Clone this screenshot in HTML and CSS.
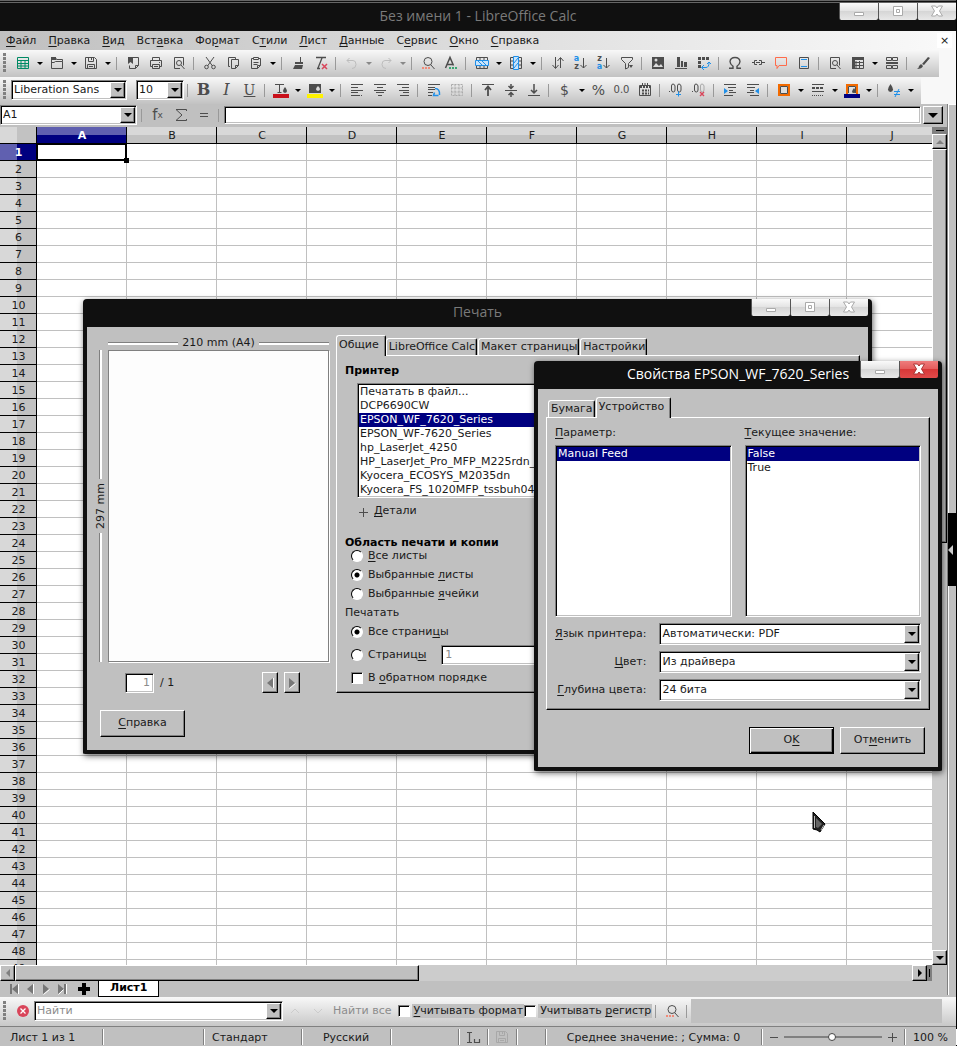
FILE: index.html
```
<!DOCTYPE html>
<html lang="ru">

<head>
  <meta charset="UTF-8">
  <title>Без имени 1 - LibreOffice Calc</title>
  <link rel="stylesheet" href="styles.css">
</head>

<body>
  <svg class="sprite" aria-hidden="true">
    <symbol id="sheet" viewBox="0 0 16 16"><path d="M2.500 2.500h11v11h-11zM2.500 5.500h11M2.500 8.500h11M2.500 11h11M6 5.500v8M10 5.500v8" stroke="#008a64"/></symbol>
    <symbol id="folder" viewBox="0 0 16 16"><path d="M2.500 13.500v-11h4l1 2h6v2M2.500 13.500h11v-7h-7l-1.500 1H3"/><path d="M2 2h5v3H2z" fill="#4d4d4d" stroke="none"/></symbol>
    <symbol id="save" viewBox="0 0 16 16"><path d="M2.500 2.500h9l2 2v9h-11zM5.500 2.500v4h5v-4M8.500 3v2M4.500 13.500v-4h7v4M6 11.500h4"/></symbol>
    <symbol id="export" viewBox="0 0 16 16"><path d="M3 2h5v7L5.500 7 3 9z" fill="#4d4d4d" stroke="none"/><path d="M8 2.500h5.500v8l-3 3h-6v-3M10.500 13.500v-3h3"/></symbol>
    <symbol id="print" viewBox="0 0 16 16"><path d="M4.500 5.500v-3h7v3M4.500 11.500h-2v-6h11v6h-2M4.500 9.500h7v4h-7zM6 11.500h4M11 7.500h1"/></symbol>
    <symbol id="preview" viewBox="0 0 16 16"><path d="M9 13.500H3.500v-11h9v8"/><circle cx="8" cy="8" r="2.500"/><path d="M10 10l3.500 4"/></symbol>
    <symbol id="cut" viewBox="0 0 16 16"><path d="M4 2l6.500 9M12 2l-6.500 9"/><circle cx="4.500" cy="12" r="1.800"/><circle cx="11.500" cy="12" r="1.800"/></symbol>
    <symbol id="copy" viewBox="0 0 16 16"><path d="M5 11.500H3.500v-9h7V4M6.500 4.500h7v6l-3 3h-4zM10.500 13.500v-3h3"/></symbol>
    <symbol id="paste" viewBox="0 0 16 16"><path d="M5.500 3.500H3.500v10h6l3-3v-7H10.500M5.500 2.500h5v2h-5zM5.500 7.500h5M5.500 9.500h4M9.500 13.500v-3h3"/></symbol>
    <symbol id="brush" viewBox="0 0 16 16"><path d="M10 2h1v5h2v2H5V7h5zM5 10h8l-1 4H3z" fill="#4d4d4d" stroke="none"/></symbol>
    <symbol id="clear" viewBox="0 0 16 16"><path d="M3 2.500h10M9 3L5 13M4 13.500h3" stroke-width="1.300"/><path d="M9 9l5 5M14 9l-5 5" stroke="#d9455a" stroke-width="1.500"/></symbol>
    <symbol id="undo" viewBox="0 0 16 16"><path d="M5.500 3L3 5.500 5.500 8M3 5.500h6q3 0 3 4t-4 4" stroke="#bdbdbd"/></symbol>
    <symbol id="redo" viewBox="0 0 16 16"><path d="M10.500 3L13 5.500 10.500 8M13 5.500H7q-3 0-3 4t4 4" stroke="#bdbdbd"/></symbol>
    <symbol id="find" viewBox="0 0 16 16"><circle cx="8" cy="6.500" r="4"/><path d="M11 10l3.500 4"/><path d="M2 13h9" stroke="#f08a78" stroke-width="2" stroke-dasharray="2 1"/></symbol>
    <symbol id="spell" viewBox="0 0 16 16"><path d="M2.500 13L7 2.500l3.500 8M4 9.500h6" stroke-width="1.500"/><path d="M6 13h9" stroke="#3aa672" stroke-width="2" stroke-dasharray="2 1"/></symbol>
    <symbol id="row" viewBox="0 0 16 16"><path d="M2.500 2.500h11v11h-11zM2.500 5.500h11M2.500 10.500h11M6 2.500v3M10 2.500v3M6 10.500v3M10 10.500v3"/><path d="M1.500 5.500h13v5h-13z" fill="#c9e4fb" stroke="#1f8fe8"/><path d="M4 6l4 4M8 6l4 4" stroke="#1f8fe8"/></symbol>
    <symbol id="col" viewBox="0 0 16 16"><path d="M2.500 2.500h11v11h-11zM5.500 2.500v11M10.500 2.500v11M2.500 6h11M2.500 10h11"/><path d="M5.500 1.500h5v13h-5z" fill="#c9e4fb" stroke="#1f8fe8"/><path d="M6 8l4-5M6 13l4-5" stroke="#1f8fe8"/></symbol>
    <symbol id="sort" viewBox="0 0 16 16"><path d="M5.500 2v11M2.500 10l3 3.500L8.500 10M10.500 13V3M7.500 6l3-3.500L13.500 6"/></symbol>
    <symbol id="arrow-down" viewBox="0 0 8 16"><path d="M4.500 3v10M1.500 10l3 3 3-3"/></symbol>
    <symbol id="filter" viewBox="0 0 16 16"><path d="M2.500 2.500h11v2l-4 4v4l-3 1.500V8.500l-4-4z"/><path d="M10 10h4l-2 3z" fill="#4d4d4d" stroke="none"/></symbol>
    <symbol id="image" viewBox="0 0 16 16"><path d="M2 2h12v12H2z" fill="#4d4d4d" stroke="none"/><path d="M3 12l3-4 3 3 2-2 2 3z" fill="#ddd" stroke="none"/><circle cx="6" cy="5" r="1.500" fill="#ddd" stroke="none"/></symbol>
    <symbol id="chart" viewBox="0 0 16 16"><path d="M4 2h3v10H4zM8 6h2v6H8zM11 7h3v5h-3z" fill="#4d4d4d" stroke="none"/><path d="M2 13.500h12"/></symbol>
    <symbol id="pivot" viewBox="0 0 16 16"><path d="M2 3.500h12M3.500 6v8" stroke-width="3" stroke-dasharray="3 1"/><path d="M6 12.500h4q3 0 3-5M8 10l-2.500 2.500L8 15M11 9l2-2 2 2" stroke="#1f8fe8"/></symbol>
    <symbol id="omega" viewBox="0 0 16 16"><path d="M2 13.300h4v-2Q3 9 3 6.500 3.500 2.500 8 2.500T13 6.500Q13 9 10 11.300v2h4" stroke-width="1.400"/></symbol>
    <symbol id="link" viewBox="0 0 16 16"><path d="M2 7.500h2M7 5.500H4.500v4H7M9 5.500h2.500v4H9M6 7.500h4M12 7.500h3"/></symbol>
    <symbol id="comment" viewBox="0 0 16 16"><path d="M2.500 2.500h11v8H6l-2 3v-3H2.500z" stroke="#ff6b4a"/></symbol>
    <symbol id="headfoot" viewBox="0 0 16 16"><path d="M3.500 2.500h9v11h-9z"/><path d="M5 4.500h6M5 11.500h6" stroke="#1f8fe8"/></symbol>
    <symbol id="freeze" viewBox="0 0 16 16"><path d="M2.500 2.500h11v11h-11zM6 6v7.500M9.500 6v7.500M3 7.500h11M3 10.500h11"/><path d="M2 2h12v3H2zM2 2h3v12H2z" fill="#4d4d4d" stroke="none"/></symbol>
    <symbol id="split" viewBox="0 0 16 16"><path d="M2.500 2.500h5v3h-5zM8.500 2.500h5v3h-5zM2.500 10.500h5v3h-5zM8.500 10.500h5v3h-5z"/><path d="M2 8h12" stroke-width="2"/></symbol>
    <symbol id="draw" viewBox="0 0 16 16"><path d="M13 2l2 1-6 7-2-1zM6 9l2 2q-1 3-6 3 2-1 2-3z" fill="#4d4d4d" stroke="none"/></symbol>
    <symbol id="fontcolor" viewBox="0 0 16 16"><path d="M2 2.500h9M6.500 3v8M4.500 10.500h4"/><path d="M12 5q4 5 0 6-4-1 0-6z" fill="#4d4d4d" stroke="none"/><path d="M0 12h16v4H0z" fill="#c9101a" stroke="none"/></symbol>
    <symbol id="hilite" viewBox="0 0 16 16"><path d="M2 2h12v9H2z" fill="#4d4d4d" stroke="none"/><path d="M11 4q4 4 0 5-4-1 0-5z" fill="#ddd" stroke="none"/><path d="M0 12h16v4H0z" fill="#fff200" stroke="none"/></symbol>
    <symbol id="left" viewBox="0 0 16 16"><path d="M2 2.500h12M2 5.500h7M2 8.500h12M2 10.500h7M2 13.500h9M12 13.500h1"/></symbol>
    <symbol id="center" viewBox="0 0 16 16"><path d="M2 2.500h12M5 5.500h6M2 8.500h12M4 10.500h8M6 13.500h4"/></symbol>
    <symbol id="right" viewBox="0 0 16 16"><path d="M2 2.500h12M7 5.500h7M4 8.500h10M8 10.500h6M5 13.500h9"/></symbol>
    <symbol id="wrap" viewBox="0 0 16 16"><path d="M2 2.500h12M2 5.500h7M2 7.500h7M2 10.500h5M2 13.500h4"/><path d="M9 6.500q5 0 4.500 6.500M8.500 10.500l-1 3h5" stroke="#1f8fe8" stroke-width="1.500"/></symbol>
    <symbol id="merge" viewBox="0 0 16 16"><path d="M2.500 2.500h11v11h-11zM6 2.500v11M10 2.500v11M2.500 6h11M2.500 10h11" stroke="#aaa" stroke-dasharray="2 1"/></symbol>
    <symbol id="top" viewBox="0 0 16 16"><path d="M2 2.500h12"/><path d="M8 5v9M5 8l3-3.500L11 8" stroke-width="1.800"/></symbol>
    <symbol id="middle" viewBox="0 0 16 16"><path d="M2 8.500h12"/><path d="M8 2v4M8 15v-4M5.500 4L8 6.500 10.500 4M5.500 13L8 10.500l2.500 2.500" stroke-width="1.500"/></symbol>
    <symbol id="bottom" viewBox="0 0 16 16"><path d="M2 13.500h12"/><path d="M8 2v9M5 8l3 3 3-3" stroke-width="1.500"/></symbol>
    <symbol id="date" viewBox="0 0 16 16"><path d="M2.500 3.500h11v10h-11zM5.500 1v3M8 1v3M10.500 1v3"/><path d="M3 5h10M5 8.500h7M5 11.500h7" stroke-width="2" stroke-dasharray="2 1"/></symbol>
    <symbol id="dec-add" viewBox="0 0 16 16"><path d="M1 9.500h1M3.500 4q0-2 1.500-2t2 2v4q0 2-1.700 2T3.500 8zM9.500 4q0-2 1.500-2t2 2v4q0 2-1.700 2T9.500 8z"/><path d="M10.500 9.500v5M8 12.500h5" stroke="#1f8fe8"/></symbol>
    <symbol id="dec-del" viewBox="0 0 16 16"><path d="M1 9.500h1M3.500 4q0-2 1.500-2t2 2v4q0 2-1.700 2T3.500 8z"/><path d="M9.500 4q0-2 1.500-2t2 2v4q0 2-1.700 2T9.500 8z" stroke="#aaa"/><path d="M9 10l4 4M13 10l-4 4" stroke="#d9455a" stroke-width="1.400"/></symbol>
    <symbol id="indent" viewBox="0 0 16 16"><path d="M2 2.500h12M6 5.500h8M7 8.500h4M7 10.500h7M2 13.500h9"/><path d="M2 6l4 3-4 3z" fill="#1f8fe8" stroke="none"/></symbol>
    <symbol id="outdent" viewBox="0 0 16 16"><path d="M2 2.500h12M2 5.500h8M5 8.500h4M2 10.500h7M5 13.500h9"/><path d="M14 6l-4 3 4 3z" fill="#1f8fe8" stroke="none"/></symbol>
    <symbol id="borders" viewBox="0 0 16 16"><path d="M3 3h10v10H3z" stroke="#f26a00" stroke-width="2"/><path d="M4.500 4.500h7v7h-7z" fill="#ddd"/></symbol>
    <symbol id="linestyle" viewBox="0 0 16 16"><path d="M2 2.500h12M2 9.500h12"/><path d="M2 6h12" stroke-width="2" stroke-dasharray="3 1"/><path d="M2 13.500h12" stroke-dasharray="1 1"/></symbol>
    <symbol id="bordercolor" viewBox="0 0 16 16"><path d="M3 12V3h10v9" stroke="#f26a00" stroke-width="2"/><path d="M4.500 11V4.500h7V11"/><path d="M10 6q4 5 0 5-4 0 0-5z" fill="#4d4d4d" stroke="none"/><path d="M0 12h16v4H0z" fill="#000080" stroke="none"/></symbol>
    <symbol id="cond" viewBox="0 0 16 16"><path d="M4.500 2q5 7 0 8-5-1 0-8z" fill="#4d4d4d" stroke="none"/><path d="M8 9.500h6M8 12.500h6M13 7l-4 8" stroke="#1f8fe8"/></symbol>
    <symbol id="sigma" viewBox="0 0 16 16"><path d="M13.500 4V2.500H3L9 8l-6 5.500h10.500V12"/></symbol>
    <symbol id="equals" viewBox="0 0 16 16"><path d="M4 6.500h8M4 9.500h8"/></symbol>
    <symbol id="min" viewBox="0 0 16 16"><path d="M3.500 9.500h9v3h-9z" fill="#fff" stroke="#aaa"/></symbol>
    <symbol id="max" viewBox="0 0 16 16"><path d="M3.500 3.500h9v9h-9zM6.500 6.500h3v3h-3z" fill="#fff" stroke="#aaa"/></symbol>
    <symbol id="close" viewBox="0 0 16 16"><path d="M2.500 3h4L8 5l1.500-2h4l-3 5 3 5h-4L8 11l-1.500 2h-4l3-5z" fill="#fff" stroke="#aaa"/></symbol>
    <symbol id="close-hot" viewBox="0 0 16 16"><path d="M2.500 3h4L8 5l1.500-2h4l-3 5 3 5h-4L8 11l-1.500 2h-4l3-5z" fill="#fff" stroke="#a33"/></symbol>
    <symbol id="plus" viewBox="0 0 16 16"><path d="M8.500 4v9M4 8.500h9"/></symbol>
    <symbol id="minus" viewBox="0 0 16 16"><path d="M4 8.500h8"/></symbol>
    <symbol id="stop" viewBox="0 0 16 16"><circle cx="8" cy="8" r="6" fill="#d9455a" stroke="none"/><path d="M5.500 5.500l5 5M10.500 5.500l-5 5" stroke="#fff" stroke-width="1.300"/></symbol>
    <symbol id="up" viewBox="0 0 16 16"><path d="M4 10l4-4 4 4" stroke="#ccc"/></symbol>
    <symbol id="down" viewBox="0 0 16 16"><path d="M4 6l4 4 4-4" stroke="#ccc"/></symbol>
    <symbol id="insert" viewBox="0 0 16 16"><path d="M2 3.500h5M4.500 4v9M2 13.500h5M9.500 10v3.500h5V10" stroke-width="1.200"/></symbol>
    <symbol id="first" viewBox="0 0 16 16"><path d="M5 3v10" stroke="#777" stroke-width="2"/><path d="M12 3v10L6 8z" fill="#777" stroke="none"/><path d="M12.500 3v10" stroke="#fff"/></symbol>
    <symbol id="prev" viewBox="0 0 16 16"><path d="M11 3v10L5 8z" fill="#777" stroke="none"/><path d="M11.500 3v10" stroke="#fff"/></symbol>
    <symbol id="next" viewBox="0 0 16 16"><path d="M5 3v10l6-5z" fill="#777" stroke="none"/><path d="M5.500 13.500l6-5" stroke="#fff"/></symbol>
    <symbol id="last" viewBox="0 0 16 16"><path d="M4 3v10l6-5z" fill="#777" stroke="none"/><path d="M11 3v10" stroke="#777" stroke-width="2"/><path d="M4.500 13.500l5-5M12.500 3v10" stroke="#fff"/></symbol>
    <symbol id="add" viewBox="0 0 16 16"><path d="M6 2h4v4h4v4h-4v4H6v-4H2V6h4z" fill="#000" stroke="none"/></symbol>
  </svg>

  <div class="window">
    <header class="titlebar">
      <h1>Без имени 1 - LibreOffice Calc</h1>
      <div class="window-buttons">
        <button aria-label="Свернуть"><svg><use href="#min"/></svg></button>
        <button aria-label="Развернуть"><svg><use href="#max"/></svg></button>
        <button aria-label="Закрыть"><svg><use href="#close"/></svg></button>
      </div>
    </header>

    <nav class="menubar">
      <button><u>Ф</u>айл</button>
      <button><u>П</u>равка</button>
      <button><u>В</u>ид</button>
      <button>Вст<u>а</u>вка</button>
      <button>Фо<u>р</u>мат</button>
      <button>С<u>т</u>или</button>
      <button><u>Л</u>ист</button>
      <button><u>Д</u>анные</button>
      <button>С<u>е</u>рвис</button>
      <button><u>О</u>кно</button>
      <button><u>С</u>правка</button>
      <button class="close-doc" aria-label="Закрыть документ">×</button>
    </nav>

    <div class="toolbar-row">
      <div class="toolbar standard">
        <span class="grip"></span>
        <button class="tool" aria-label="Создать"><svg><use href="#sheet"/></svg></button><button class="drop" aria-label="Ещё"></button>
        <button class="tool" aria-label="Открыть"><svg><use href="#folder"/></svg></button><button class="drop" aria-label="Ещё"></button>
        <button class="tool" aria-label="Сохранить"><svg><use href="#save"/></svg></button><button class="drop" aria-label="Ещё"></button>
        <span class="sep"></span>
        <button class="tool" aria-label="Экспорт"><svg><use href="#export"/></svg></button>
        <button class="tool" aria-label="Печать"><svg><use href="#print"/></svg></button>
        <button class="tool" aria-label="Просмотр"><svg><use href="#preview"/></svg></button>
        <span class="sep"></span>
        <button class="tool" aria-label="Вырезать"><svg><use href="#cut"/></svg></button>
        <button class="tool" aria-label="Копировать"><svg><use href="#copy"/></svg></button>
        <button class="tool" aria-label="Вставить"><svg><use href="#paste"/></svg></button><button class="drop" aria-label="Ещё"></button>
        <span class="sep"></span>
        <button class="tool" aria-label="Копировать форматирование"><svg><use href="#brush"/></svg></button>
        <button class="tool" aria-label="Очистить"><svg><use href="#clear"/></svg></button>
        <span class="sep"></span>
        <button class="tool" aria-label="Отменить"><svg><use href="#undo"/></svg></button><button class="drop off" aria-label="Ещё"></button>
        <button class="tool" aria-label="Вернуть"><svg><use href="#redo"/></svg></button><button class="drop off" aria-label="Ещё"></button>
        <span class="sep"></span>
        <button class="tool" aria-label="Найти и заменить"><svg><use href="#find"/></svg></button>
        <button class="tool" aria-label="Орфография"><svg><use href="#spell"/></svg></button>
        <span class="sep"></span>
        <button class="tool" aria-label="Строка"><svg><use href="#row"/></svg></button><button class="drop" aria-label="Ещё"></button>
        <button class="tool" aria-label="Столбец"><svg><use href="#col"/></svg></button><button class="drop" aria-label="Ещё"></button>
        <span class="sep"></span>
        <button class="tool" aria-label="Сортировка"><svg><use href="#sort"/></svg></button>
        <button class="tool sort" aria-label="По возрастанию"><span><b>a</b><i>z</i></span><svg><use href="#arrow-down"/></svg></button>
        <button class="tool sort" aria-label="По убыванию"><span><i>z</i><b>a</b></span><svg><use href="#arrow-down"/></svg></button>
        <button class="tool" aria-label="Автофильтр"><svg><use href="#filter"/></svg></button>
        <span class="sep"></span>
        <button class="tool" aria-label="Изображение"><svg><use href="#image"/></svg></button>
        <button class="tool" aria-label="Диаграмма"><svg><use href="#chart"/></svg></button>
        <button class="tool" aria-label="Сводная таблица"><svg><use href="#pivot"/></svg></button>
        <span class="sep"></span>
        <button class="tool" aria-label="Специальные символы"><svg><use href="#omega"/></svg></button>
        <button class="tool" aria-label="Гиперссылка"><svg><use href="#link"/></svg></button>
        <button class="tool" aria-label="Комментарий"><svg><use href="#comment"/></svg></button>
        <button class="tool" aria-label="Колонтитулы"><svg><use href="#headfoot"/></svg></button>
        <span class="sep"></span>
        <button class="tool" aria-label="Область печати"><svg><use href="#preview"/></svg></button>
        <button class="tool" aria-label="Закрепить"><svg><use href="#freeze"/></svg></button><button class="drop" aria-label="Ещё"></button>
        <button class="tool" aria-label="Разделить окно"><svg><use href="#split"/></svg></button>
        <span class="sep"></span>
        <button class="tool" aria-label="Функции рисования"><svg><use href="#draw"/></svg></button>
      </div>
    </div>

    <div class="toolbar-row">
      <div class="toolbar formatting">
        <span class="grip"></span>
        <span class="combo font-name"><select aria-label="Шрифт"><option>Liberation Sans</option></select><span class="combo-arrow"></span></span>
        <span class="combo font-size"><select aria-label="Размер"><option>10</option></select><span class="combo-arrow"></span></span>
        <span class="sep"></span>
        <button class="tool letter bold">B</button>
        <button class="tool letter italic">I</button>
        <button class="tool letter underline">U</button>
        <span class="sep"></span>
        <button class="tool" aria-label="Цвет текста"><svg><use href="#fontcolor"/></svg></button><button class="drop" aria-label="Ещё"></button>
        <button class="tool" aria-label="Цвет фона"><svg><use href="#hilite"/></svg></button><button class="drop" aria-label="Ещё"></button>
        <span class="sep"></span>
        <button class="tool" aria-label="По левому краю"><svg><use href="#left"/></svg></button>
        <button class="tool" aria-label="По центру"><svg><use href="#center"/></svg></button>
        <button class="tool" aria-label="По правому краю"><svg><use href="#right"/></svg></button>
        <span class="sep"></span>
        <button class="tool" aria-label="Обтекание"><svg><use href="#wrap"/></svg></button>
        <button class="tool" aria-label="Объединить"><svg><use href="#merge"/></svg></button>
        <span class="sep"></span>
        <button class="tool" aria-label="По верху"><svg><use href="#top"/></svg></button>
        <button class="tool" aria-label="По середине"><svg><use href="#middle"/></svg></button>
        <button class="tool" aria-label="По низу"><svg><use href="#bottom"/></svg></button>
        <span class="sep"></span>
        <button class="tool sign">$</button><button class="drop" aria-label="Ещё"></button>
        <button class="tool sign">%</button>
        <button class="tool number">0.0</button>
        <button class="tool" aria-label="Дата"><svg><use href="#date"/></svg></button>
        <span class="sep"></span>
        <button class="tool" aria-label="Добавить разряд"><svg><use href="#dec-add"/></svg></button>
        <button class="tool" aria-label="Убрать разряд"><svg><use href="#dec-del"/></svg></button>
        <span class="sep"></span>
        <button class="tool" aria-label="Увеличить отступ"><svg><use href="#indent"/></svg></button>
        <button class="tool" aria-label="Уменьшить отступ"><svg><use href="#outdent"/></svg></button>
        <span class="sep"></span>
        <button class="tool" aria-label="Обрамление"><svg><use href="#borders"/></svg></button><button class="drop" aria-label="Ещё"></button>
        <button class="tool" aria-label="Стиль линии"><svg><use href="#linestyle"/></svg></button><button class="drop" aria-label="Ещё"></button>
        <button class="tool" aria-label="Цвет линии"><svg><use href="#bordercolor"/></svg></button><button class="drop" aria-label="Ещё"></button>
        <span class="sep"></span>
        <button class="tool" aria-label="Условное форматирование"><svg><use href="#cond"/></svg></button><button class="drop" aria-label="Ещё"></button>
      </div>
    </div>

    <main class="workspace">
      <div class="document">
        <div class="formula-bar">
          <span class="combo name-box"><input aria-label="Имя ячейки" value="A1"><span class="combo-arrow"></span></span>
          <span class="sep"></span>
          <button class="tool fx">f<sub>x</sub></button>
          <button class="tool" aria-label="Сумма"><svg><use href="#sigma"/></svg></button>
          <button class="tool" aria-label="Формула"><svg><use href="#equals"/></svg></button>
          <span class="sep"></span>
          <input class="formula" aria-label="Строка ввода">
          <button class="expand" aria-label="Развернуть строку"></button>
        </div>

        <div class="sheet">
          <div class="grid">
            <table>
              <thead><tr id="columns"></tr></thead>
              <tbody id="rows"></tbody>
            </table>
          </div>
          <div class="vscroll">
            <span class="splitter"></span>
            <button class="scroll-button up" aria-label="Вверх"></button>
            <span class="thumb"></span>
            <button class="scroll-button down" aria-label="Вниз"></button>
          </div>
        </div>

        <div class="hscroll">
          <button class="scroll-button back" aria-label="Влево"></button>
          <div class="track"><span class="thumb"></span></div>
          <button class="scroll-button forward" aria-label="Вправо"></button>
          <span class="splitter"></span>
        </div>

        <div class="sheet-tabs">
          <button aria-label="Первый"><svg><use href="#first"/></svg></button>
          <button aria-label="Назад"><svg><use href="#prev"/></svg></button>
          <button aria-label="Вперёд"><svg><use href="#next"/></svg></button>
          <button aria-label="Последний"><svg><use href="#last"/></svg></button>
          <button class="add" aria-label="Добавить лист"><svg><use href="#add"/></svg></button>
          <button class="current">Лист1</button>
        </div>
      </div>
      <aside class="sidebar"><button aria-label="Показать панель"></button></aside>
    </main>

    <div class="findbar">
      <span class="grip"></span>
      <button class="tool" aria-label="Закрыть поиск"><svg><use href="#stop"/></svg></button>
      <span class="combo find"><input aria-label="Найти" placeholder="Найти"><span class="combo-arrow"></span></span>
      <button class="tool" aria-label="Предыдущее"><svg><use href="#up"/></svg></button>
      <button class="tool" aria-label="Следующее"><svg><use href="#down"/></svg></button>
      <button class="find-all" disabled>Найти все</button>
      <label class="option"><input type="checkbox"><span><u>У</u>читывать формат</span></label>
      <label class="option"><input type="checkbox"><span>Учитывать <u>р</u>егистр</span></label>
      <span class="sep"></span>
      <button class="tool" aria-label="Найти и заменить"><svg><use href="#find"/></svg></button>
      <span class="sep"></span>
      <span class="message"></span>
    </div>

    <footer class="statusbar">
      <span class="sheet-count">Лист 1 из 1</span>
      <span class="wide"></span>
      <span class="style">Стандарт</span>
      <span class="language">Русский</span>
      <span class="empty"></span>
      <span class="small"><svg><use href="#insert"/></svg></span>
      <span class="small faded"><svg><use href="#save"/></svg></span>
      <span class="small"></span>
      <span class="totals">Среднее значение: ; Сумма: 0</span>
      <span class="zoom">
        <button aria-label="Уменьшить"><svg><use href="#minus"/></svg></button>
        <input type="range" aria-label="Масштаб" min="0" max="100" value="49">
        <button aria-label="Увеличить"><svg><use href="#plus"/></svg></button>
      </span>
      <span class="percent">100 %</span>
    </footer>
  </div>

  <section class="dialog print-dialog">
    <header class="dialog-title">
      <h2>Печать</h2>
      <div class="window-buttons">
        <button aria-label="Свернуть"><svg><use href="#min"/></svg></button>
        <button aria-label="Развернуть"><svg><use href="#max"/></svg></button>
        <button aria-label="Закрыть"><svg><use href="#close"/></svg></button>
      </div>
    </header>
    <div class="print-body">
      <div class="preview">
        <div class="paper-width">210 mm (A4)</div>
        <div class="paper-height">297 mm</div>
        <div class="paper"></div>
        <div class="pager">
          <input aria-label="Страница" value="1" disabled>
          <span>/ 1</span>
          <button class="page-button" aria-label="Назад"><svg><use href="#prev"/></svg></button>
          <button class="page-button" aria-label="Вперёд"><svg><use href="#next"/></svg></button>
        </div>
      </div>
      <div class="settings">
        <div class="tabs">
          <button class="tab active">Общие</button>
          <button class="tab">LibreOffice Calc</button>
          <button class="tab">Макет страницы</button>
          <button class="tab">Настройки</button>
        </div>
        <div class="panel">
          <h3>Принтер</h3>
          <select class="listbox printers" size="8" aria-label="Принтер">
            <option>Печатать в файл...</option>
            <option>DCP6690CW</option>
            <option selected>EPSON_WF_7620_Series</option>
            <option>EPSON_WF-7620_Series</option>
            <option>hp_LaserJet_4250</option>
            <option>HP_LaserJet_Pro_MFP_M225rdn_</option>
            <option>Kyocera_ECOSYS_M2035dn</option>
            <option>Kyocera_FS_1020MFP_tssbuh04</option>
          </select>
          <button class="details"><svg><use href="#plus"/></svg><span><u>Д</u>етали</span></button>
          <h3>Область печати и копии</h3>
          <label class="choice"><input type="radio" name="range"><span><u>В</u>се листы</span></label>
          <label class="choice"><input type="radio" name="range" checked><span>Выбранные <u>л</u>исты</span></label>
          <label class="choice"><input type="radio" name="range"><span>Выбранные <u>я</u>чейки</span></label>
          <p>Печатать</p>
          <label class="choice"><input type="radio" name="pages" checked><span>Все страни<u>ц</u>ы</span></label>
          <div class="choice pages">
            <input type="radio" name="pages" id="some-pages"><label for="some-pages">Страниц<u>ы</u></label>
            <input type="text" aria-label="Номера страниц" value="1" disabled>
          </div>
          <label class="choice"><input type="checkbox"><span>В <u>о</u>братном порядке</span></label>
        </div>
      </div>
    </div>
    <div class="dialog-buttons">
      <button class="push"><u>С</u>правка</button>
    </div>
  </section>

  <section class="dialog properties-dialog">
    <header class="dialog-title">
      <h2>Свойства EPSON_WF_7620_Series</h2>
      <div class="window-buttons">
        <button aria-label="Свернуть"><svg><use href="#min"/></svg></button>
        <button class="hot" aria-label="Закрыть"><svg><use href="#close-hot"/></svg></button>
      </div>
    </header>
    <div class="tabs">
      <button class="tab">Бумага</button>
      <button class="tab active">Устройство</button>
    </div>
    <div class="panel">
      <div class="lists">
        <div>
          <label for="option"><u>П</u>араметр:</label>
          <select class="listbox" size="12" id="option"><option selected>Manual Feed</option></select>
        </div>
        <div>
          <label for="value"><u>Т</u>екущее значение:</label>
          <select class="listbox" size="12" id="value"><option selected>False</option><option>True</option></select>
        </div>
      </div>
      <div class="fields">
        <label for="language"><u>Я</u>зык принтера:</label>
        <span class="combo"><select id="language"><option>Автоматически: PDF</option></select><span class="combo-arrow"></span></span>
        <label for="color"><u>Ц</u>вет:</label>
        <span class="combo"><select id="color"><option>Из драйвера</option></select><span class="combo-arrow"></span></span>
        <label for="depth"><u>Г</u>лубина цвета:</label>
        <span class="combo"><select id="depth"><option>24 бита</option></select><span class="combo-arrow"></span></span>
      </div>
    </div>
    <div class="dialog-buttons">
      <button class="push default">O<u>K</u></button>
      <button class="push">От<u>м</u>енить</button>
    </div>
  </section>

  <svg class="pointer" viewBox="0 0 14 22"><path d="M1 1v17l4 1 3 2 5-8z" fill="#222" stroke="#000"/><path d="M2.500 5v12M9 19l3-5" stroke="#bbb"/><path d="M4 7l6 6-4 4-2-1z" fill="#666" stroke="none"/></svg>

  <script src="script.js"></script>
</body>

</html>
```
FILE: styles.css
```
:root {
  --face: #c0c0c0;
  --navy: #000080;
  --frame: #101010;
  --bar: linear-gradient(#f8f8f8, #c2c2c2);
}

* {
  box-sizing: border-box;
}

body {
  margin: 0;
  background: var(--face);
  color: #1a1a1a;
  font: 11px/14px "DejaVu Sans", sans-serif;
  overflow: hidden;
}

button, input, select {
  margin: 0;
  padding: 0;
  border: 0;
  border-radius: 0;
  outline: none;
  background: none;
  color: inherit;
  font: inherit;
}

h1, h2, h3, p {
  margin: 0;
}

u {
  text-underline-offset: 2px;
}

svg {
  display: block;
  flex: none;
  width: 16px;
  height: 16px;
  fill: none;
  stroke: #4d4d4d;
}

.sprite {
  position: absolute;
  width: 0;
  height: 0;
}

.window {
  display: flex;
  flex-direction: column;
  height: 100vh;
  border-right: 1px solid #000;
}

/* Title bars */
.titlebar, .dialog-title {
  display: flex;
  justify-content: center;
  align-items: center;
  position: relative;
  flex: none;
  padding-bottom: 2px;
  background: var(--frame);
  color: #7a7a7a;
}

.titlebar {
  height: 31px;
  border-top: 3px double #666;
}

h1, h2 {
  font: 14px/20px "Open Sans", "Noto Sans", sans-serif;
}

.window-buttons {
  position: absolute;
  top: 0;
  right: 0;
  display: flex;
}

.window-buttons button {
  display: flex;
  justify-content: center;
  width: 39px;
  height: 17px;
  border-left: 1px solid #555;
  border-radius: 0 0 2px 2px;
  background: linear-gradient(#fafafa, #e2e2e2 50%, #d6d6d6 50%, #e8e8e8);
}

.window-buttons .hot {
  background: linear-gradient(#ee7c7c, #e35a5a 50%, #d83838 50%, #e04a4a);
}

/* Menu and toolbars */
.menubar {
  display: flex;
  flex: none;
  height: 19px;
  background: linear-gradient(to right, #c0c0c0, #fafafa);
}

.menubar button {
  padding: 0 6px;
}

.menubar .close-doc {
  width: 15px;
  height: 15px;
  margin: 2px 4px 0 auto;
  padding: 0;
  background: #fff;
}

.toolbar-row {
  display: flex;
  flex: none;
  background: #f8f8f8;
}

.toolbar {
  display: flex;
  align-items: center;
  height: 27px;
  padding: 0 5px 1px 0;
  background: var(--bar);
}

.grip {
  flex: none;
  width: 3px;
  height: 20px;
  margin: 0 5px 0 3px;
  background: repeating-linear-gradient(#808080 0 3px, transparent 3px 4px);
}

.tool {
  display: flex;
  justify-content: center;
  align-items: center;
  flex: none;
  width: 23px;
  height: 22px;
  color: #4d4d4d;
}

.drop {
  flex: none;
  width: 11px;
  height: 22px;
}

.drop::before, .combo-arrow::before, .expand::before {
  content: "";
  display: block;
  width: 0;
  margin: auto;
  border: 3px solid transparent;
  border-top-color: #000;
  border-bottom: 0;
}

.combo-arrow::before {
  border-width: 4px 4px 0;
}

.off::before {
  border-top-color: #888;
}

.sep {
  flex: none;
  width: 8px;
  height: 13px;
  background: linear-gradient(#999, #999) 3px 0 / 1px 100% no-repeat;
}

.sort span {
  display: flex;
  flex-direction: column;
  font-size: 8px;
  line-height: 8px;
}

.sort b {
  color: #1f8fe8;
}

.sort i {
  font-style: normal;
  font-weight: bold;
}

.sort svg {
  width: 8px;
}

.letter {
  font: 16px/18px "DejaVu Serif", serif;
}

.bold {
  font-weight: bold;
}

.italic {
  font-style: italic;
}

.underline {
  text-decoration: underline;
  font-size: 14px;
}

.sign {
  font-size: 14px;
}

.number {
  font-size: 10px;
}

/* Sunken fields with a drop button */
.combo, .formula, .pager input, .pages input[type="text"], .listbox {
  border: 1px solid;
  border-color: #808080 #fff #fff #808080;
  background: #fff;
  box-shadow: inset 1px 1px #000, inset -1px -1px var(--face);
}

.combo {
  display: flex;
  flex: none;
  height: 20px;
  padding: 1px;
}

.combo select, .combo input {
  appearance: none;
  flex: 1;
  min-width: 0;
  padding: 0 1px;
}

.combo-arrow, .scroll-button, .expand, .page-button, .push, .thumb {
  border: 1px solid;
  border-color: #fff #000 #000 #fff;
  background: var(--face);
  box-shadow: inset -1px -1px #808080;
}

.combo-arrow {
  display: flex;
  align-items: center;
  flex: none;
  width: 15px;
}

.font-name {
  width: 116px;
}

.font-size {
  width: 48px;
  margin-left: 9px;
}

.name-box {
  width: 137px;
  margin-right: 1px;
}

/* Work area */
.workspace {
  display: flex;
  flex: 1;
  min-height: 0;
}

.document {
  display: flex;
  flex-direction: column;
  flex: 1;
  min-width: 0;
}

.formula-bar {
  display: flex;
  align-items: center;
  flex: none;
  height: 23px;
  padding: 0 4px 1px 0;
}

.fx {
  font: 15px/18px "DejaVu Sans", sans-serif;
}

.fx sub {
  font-size: 9px;
}

.formula {
  flex: 1;
  min-width: 0;
  height: 18px;
  margin-left: 1px;
}

.expand {
  width: 20px;
  height: 18px;
  margin-left: 2px;
}

.expand::before {
  border-width: 5px 5px 0;
}

.sheet {
  display: flex;
  flex: 1;
  min-height: 0;
}

.grid {
  flex: 1;
  min-width: 0;
  overflow: hidden;
  background: #fff;
}

table {
  width: 937px;
  table-layout: fixed;
  border-spacing: 0;
}

th, td {
  width: 90px;
  height: 17px;
  padding: 1px 0 0 1px;
  border: solid #c0c0c0;
  border-width: 0 1px 1px 0;
  line-height: 14px;
}

th {
  border-color: #000;
  background: linear-gradient(#d8d8d8 50%, #c2c2c2 50%);
  font-weight: normal;
}

tbody th, .corner {
  width: 37px;
  background: linear-gradient(to right, #d8d8d8 17px, #c2c2c2 17px);
}

th.selected {
  color: #fff;
  font-weight: bold;
  background: linear-gradient(#6060b0 50%, var(--navy) 50%);
}

tbody th.selected {
  background: linear-gradient(to right, #6060b0 17px, var(--navy) 17px);
}

td.selected {
  position: relative;
  box-shadow: inset 0 0 0 1px #000;
  border-color: #000;
}

td.selected::after {
  content: "";
  position: absolute;
  right: -3px;
  bottom: -3px;
  width: 5px;
  height: 5px;
  background: #000;
}

.vscroll {
  display: flex;
  flex-direction: column;
  flex: none;
  width: 15px;
  background: #ccc;
}

.vscroll .splitter {
  height: 7px;
  background: linear-gradient(#000, #000) center / 8px 1px no-repeat #808080;
}

.vscroll .thumb {
  height: 47%;
}

.scroll-button {
  display: flex;
  justify-content: center;
  align-items: center;
  flex: none;
  width: 15px;
  height: 15px;
}

.scroll-button::before {
  content: "";
  border: 4px solid transparent;
}

.up::before {
  border-bottom-color: #808080;
  border-top: 0;
}

.down {
  margin-top: auto;
}

.down::before {
  border-top-color: #000;
  border-bottom: 0;
}

.back::before {
  border-right-color: #808080;
  border-left: 0;
}

.forward::before {
  border-left-color: #000;
  border-right: 0;
}

.hscroll {
  display: flex;
  flex: none;
  height: 16px;
  padding-right: 15px;
}

.hscroll .scroll-button {
  height: 16px;
}

.track {
  display: flex;
  flex: 1;
  background: #ccc;
}

.track .thumb {
  width: 45%;
}

.hscroll .splitter {
  width: 5px;
  background: linear-gradient(#000, #000) center / 1px 8px no-repeat #808080;
}

.sheet-tabs {
  display: flex;
  flex: none;
  height: 16px;
  padding-left: 6px;
}

.sheet-tabs .add {
  margin: 0 6px;
}

.sheet-tabs .current {
  padding: 0 11px 1px;
  border: 1px solid #000;
  border-top: 0;
  background: #fff;
  color: #000;
  font-weight: bold;
}

.sidebar {
  display: flex;
  flex-direction: column;
  justify-content: center;
  flex: none;
  width: 9px;
  margin-bottom: 2px;
  border-left: 1px solid #808080;
  box-shadow: inset 1px 1px #fff;
}

.sidebar button {
  height: 73px;
  background: #000;
}

.sidebar button::before {
  content: "";
  display: block;
  width: 0;
  border: 5px solid transparent;
  border-right-color: #ccc;
  border-left: 0;
}

/* Find bar and status bar */
.findbar {
  display: flex;
  align-items: center;
  flex: none;
  height: 29px;
  background: linear-gradient(#f8f8f8, #c8c8c8);
  padding: 0 14px 1px 0;
}

.find {
  width: 249px;
}

.find input::placeholder {
  color: #8c8c8c;
}

.find-all {
  padding: 0 6px 0 4px;
  color: #8c8c8c;
}

.option {
  display: flex;
  align-items: center;
  gap: 2px;
}

.option span {
  padding: 0 1px 0 2px;
  background: var(--face);
}

.message {
  align-self: stretch;
  flex: 1;
  margin: 2px 0;
  background: var(--face);
}

input[type="checkbox"] {
  appearance: none;
  flex: none;
  width: 12px;
  height: 12px;
  border: 1px solid;
  border-color: #808080 #fff #fff #808080;
  background: #fff;
  box-shadow: inset 1px 1px #000;
}

input[type="radio"] {
  appearance: none;
  flex: none;
  width: 12px;
  height: 12px;
  border: 1px solid;
  border-color: #000 #fff #fff #000;
  border-radius: 50%;
  background: #fff;
}

input[type="radio"]:checked {
  background: radial-gradient(circle, #000 2px, #fff 3px);
}

.statusbar {
  display: flex;
  flex: none;
  height: 20px;
  padding: 2px 0 1px;
  border-top: 1px solid #808080;
  line-height: 17px;
}

.statusbar > span {
  flex: none;
  border-right: 1px solid #808080;
  box-shadow: 1px 0 #fff;
  text-align: center;
}

.statusbar .sheet-count {
  width: 103px;
  padding-left: 10px;
  text-align: left;
}

.statusbar .wide {
  width: 101px;
}

.statusbar .style {
  width: 98px;
  padding-left: 8px;
  text-align: left;
}

.statusbar .language {
  width: 89px;
}

.statusbar .empty {
  width: 68px;
}

.statusbar .small {
  width: 29px;
  padding-left: 6px;
}

.faded svg {
  opacity: 0.2;
}

.statusbar .totals {
  flex: 1;
}

.statusbar .zoom {
  display: flex;
  align-items: center;
  width: 143px;
  padding-left: 4px;
}

.statusbar .percent {
  width: 51px;
  border: 0;
}

input[type="range"] {
  appearance: none;
  width: 98px;
  margin: 0 2px;
  height: 2px;
  background: #808080;
}

input[type="range"]::-webkit-slider-thumb {
  appearance: none;
  width: 8px;
  height: 8px;
  border: 1px solid #444;
  border-radius: 50%;
  background: #fff;
}

/* Dialogs float over the main window */
.dialog {
  position: absolute;
  border: 4px solid var(--frame);
  border-top: 0;
  border-radius: 4px 4px 2px 2px;
  background: var(--face);
  box-shadow: 1px 2px 6px rgba(0, 0, 0, 0.6);
}

.dialog-title {
  height: 28px;
}

.print-dialog {
  top: 299px;
  left: 83px;
  width: 789px;
}

.properties-dialog {
  top: 361px;
  left: 534px;
  width: 408px;
}

.properties-dialog h2 {
  color: #fff;
}

.print-body {
  display: flex;
  gap: 7px;
  padding: 8px 8px 0 6px;
}

.preview {
  display: grid;
  grid-template: 15px 312px auto / 15px 221px;
  flex: none;
}

.paper-width {
  grid-column: 2;
  display: flex;
  align-items: center;
  gap: 4px;
  padding-top: 1px;
}

.paper-width::before, .paper-width::after {
  content: "";
  flex: 1;
  height: 2px;
  border-top: 1px solid #808080;
  background: #fff;
}

.paper-height {
  grid-column: 1;
  display: flex;
  justify-content: center;
  align-items: center;
  gap: 4px;
  writing-mode: vertical-rl;
  transform: rotate(180deg);
}

.paper-height::before, .paper-height::after {
  content: "";
  flex: 1;
  width: 2px;
  border-right: 1px solid #808080;
  background: #fff;
}

.paper {
  border: 1px solid #808080;
  box-shadow: 1px 1px #fff;
  background: #fdfdfd;
}

.pager {
  grid-column: 2;
  display: flex;
  align-items: center;
  padding: 10px 0 0 17px;
}

.pager input {
  width: 29px;
  height: 20px;
  padding-right: 3px;
  color: #8c8c8c;
  text-align: right;
}

.pager span {
  margin: 0 auto 0 6px;
}

.page-button {
  width: 16px;
  height: 21px;
  margin-right: 6px;
}

.page-button svg {
  margin-left: -1px;
}

.page-button:last-child {
  margin-right: 29px;
}

.settings {
  flex: 1;
  min-width: 0;
}

.tabs {
  display: flex;
  align-items: flex-end;
  height: 20px;
}

.tab {
  height: 17px;
  padding: 0 1px 0 2px;
  border: 1px solid;
  border-color: #fff #000 transparent #fff;
  border-bottom: 0;
  border-radius: 3px 2px 0 0;
  box-shadow: inset -1px 0 #808080;
  white-space: nowrap;
}

.tab + .tab {
  margin-left: 1px;
}

.tab.active {
  z-index: 1;
  height: 21px;
  margin-bottom: -1px;
  padding: 0 6px 2px 2px;
  background: var(--face);
}

.tab.active + .tab {
  margin-left: 0;
}

.panel {
  border: 1px solid;
  border-color: #fff #000 #000 #fff;
  box-shadow: inset -1px -1px #808080;
}

.print-dialog .panel {
  height: 338px;
  padding: 8px;
}

h3 {
  color: #000;
  font-size: 11px;
  line-height: 14px;
}

.listbox {
  display: block;
  width: 100%;
  padding: 1px;
  overflow: hidden;
}

.listbox option {
  min-height: 14px;
  padding: 0 1px;
  line-height: 14px;
}

.listbox option:checked {
  background: linear-gradient(var(--navy), var(--navy));
  color: #fff;
  -webkit-text-fill-color: #fff;
}

.printers {
  width: auto;
  min-width: 240px;
  height: 115px;
  margin: 5px 0 6px 12px;
}

.details {
  display: flex;
  gap: 3px;
  margin: 0 0 16px 10px;
}

.choice {
  display: flex;
  align-items: center;
  gap: 5px;
  height: 19px;
  padding-left: 6px;
}

h3 + .choice {
  height: 12px;
  margin-bottom: 3px;
}

.print-dialog p {
  line-height: 19px;
}

.pages {
  height: 27px;
}

.pages input[type="text"] {
  width: 240px;
  height: 20px;
  margin-left: 10px;
  padding: 0 3px;
  color: #8c8c8c;
}

.dialog-buttons {
  display: flex;
  justify-content: flex-end;
  gap: 6px;
  padding: 17px 13px 13px;
}

.print-dialog .dialog-buttons {
  justify-content: flex-start;
}

.push {
  width: 85px;
  height: 27px;
  padding-bottom: 2px;
}

.push.default {
  border-color: #000;
  box-shadow: inset 1px 1px #fff, inset -1px -1px #000, inset -2px -2px #808080;
}

.properties-dialog .tabs {
  padding-left: 10px;
  height: 28px;
}

.properties-dialog .panel {
  margin: 0 8px;
  padding: 8px;
}

.lists {
  display: grid;
  grid-template-columns: 1fr 1fr;
  gap: 13px;
}

.lists .listbox {
  height: 172px;
  margin-top: 5px;
}

.fields {
  display: grid;
  grid-template-columns: auto 1fr;
  align-items: center;
  gap: 6px 13px;
  margin-top: 6px;
  text-align: right;
}

.fields .combo {
  height: 22px;
}

/* Mouse pointer */
.pointer {
  position: absolute;
  top: 811px;
  left: 812px;
  width: 14px;
  height: 22px;
}
```
FILE: script.js
```
const columns = document.getElementById('columns');
const rows = document.getElementById('rows');
const letters = 'ABCDEFGHIJ'.split('');

columns.innerHTML = '<th class="corner"></th>' + letters.map((letter, i) =>
  `<th${i === 0 ? ' class="selected"' : ''}>${letter}</th>`).join('');

for (let n = 1; n <= 49; n++) {
  const first = n === 1 ? ' class="selected"' : '';
  const row = document.createElement('tr');
  row.innerHTML = `<th${first}>${n}</th><td${first}></td>` + '<td></td>'.repeat(letters.length - 1);
  rows.appendChild(row);
}
```
